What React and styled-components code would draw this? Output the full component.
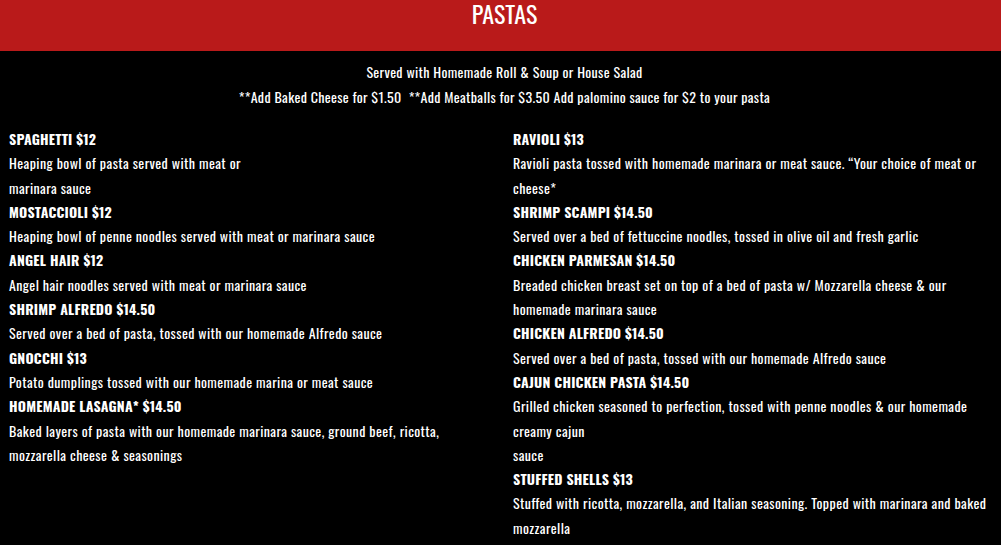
import React from "react";
import styled, { createGlobalStyle } from "styled-components";

const FONT = `"Oswald", "Liberation Sans Narrow", "DejaVu Sans Condensed", "Roboto", sans-serif`;

const GlobalStyle = createGlobalStyle`
  html, body { margin: 0; padding: 0; background: #000; }
  body { font-family: ${FONT}; color: #fff; }
`;

const Page = styled.div`
  width: 1001px;
  min-height: 545px;
  background: #000;
  overflow: hidden;
`;

const Banner = styled.header`
  height: 51px;
  padding-left: 8px;
  box-sizing: border-box;
  background: #b91a1a;
  display: flex;
  justify-content: center;
  align-items: flex-start;
`;

const Title = styled.h1`
  margin: 0;
  padding: 0;
  font-family: ${FONT};
  font-weight: 400;
  font-size: 24px;
  line-height: 26px;
  color: #fff;
`;

const Intro = styled.div`
  padding: 8px 0 0 8px;
  text-align: center;
`;

const IntroLine = styled.p`
  margin: 0;
  font-size: 14px;
  line-height: 25px;
  letter-spacing: 0.33px;
  white-space: pre;
`;

const Columns = styled.div`
  display: grid;
  grid-template-columns: 504px 1fr;
  padding-top: 18px;
`;

const Column = styled.div`
  padding: 0 9px;
`;

const ItemName = styled.h3`
  margin: 0;
  font-size: 14px;
  font-weight: 700;
  line-height: 24.3px;
  letter-spacing: 0.2px;
  text-transform: uppercase;
`;

const ItemText = styled.p`
  margin: 0;
  font-size: 14px;
  line-height: 24.3px;
  letter-spacing: 0.4px;
  white-space: nowrap;
`;

const left = [
  { name: "SPAGHETTI $12", lines: ["Heaping bowl of pasta served with meat or", "marinara sauce"] },
  { name: "MOSTACCIOLI $12", lines: ["Heaping bowl of penne noodles served with meat or marinara sauce"] },
  { name: "ANGEL HAIR $12", lines: ["Angel hair noodles served with meat or marinara sauce"] },
  { name: "SHRIMP ALFREDO $14.50", lines: ["Served over a bed of pasta, tossed with our homemade Alfredo sauce"] },
  { name: "GNOCCHI $13", lines: ["Potato dumplings tossed with our homemade marina or meat sauce"] },
  {
    name: "HOMEMADE LASAGNA* $14.50",
    lines: ["Baked layers of pasta with our homemade marinara sauce, ground beef, ricotta,", "mozzarella cheese & seasonings"],
  },
];

const right = [
  {
    name: "RAVIOLI $13",
    lines: ["Ravioli pasta tossed with homemade marinara or meat sauce. \u201CYour choice of meat or", "cheese*"],
  },
  { name: "SHRIMP SCAMPI $14.50", lines: ["Served over a bed of fettuccine noodles, tossed in olive oil and fresh garlic"] },
  {
    name: "CHICKEN PARMESAN $14.50",
    lines: ["Breaded chicken breast set on top of a bed of pasta w/ Mozzarella cheese & our", "homemade marinara sauce"],
  },
  { name: "CHICKEN ALFREDO $14.50", lines: ["Served over a bed of pasta, tossed with our homemade Alfredo sauce"] },
  {
    name: "CAJUN CHICKEN PASTA $14.50",
    lines: ["Grilled chicken seasoned to perfection, tossed with penne noodles & our homemade", "creamy cajun", "sauce"],
  },
  {
    name: "STUFFED SHELLS $13",
    lines: ["Stuffed with ricotta, mozzarella, and Italian seasoning. Topped with marinara and baked", "mozzarella"],
  },
];

function MenuColumn({ items }) {
  return (
    <Column>
      {items.map((it) => (
        <div key={it.name}>
          <ItemName>{it.name}</ItemName>
          {it.lines.map((l, i) => (
            <ItemText key={i}>{l}</ItemText>
          ))}
        </div>
      ))}
    </Column>
  );
}

export default function App() {
  return (
    <Page>
      <GlobalStyle />
      <Banner>
        <Title>PASTAS</Title>
      </Banner>
      <Intro>
        <IntroLine>Served with Homemade Roll &amp; Soup or House Salad</IntroLine>
        <IntroLine>{"**Add Baked Cheese for $1.50  **Add Meatballs for $3.50 Add palomino sauce for $2 to your pasta"}</IntroLine>
      </Intro>
      <Columns>
        <MenuColumn items={left} />
        <MenuColumn items={right} />
      </Columns>
    </Page>
  );
}
